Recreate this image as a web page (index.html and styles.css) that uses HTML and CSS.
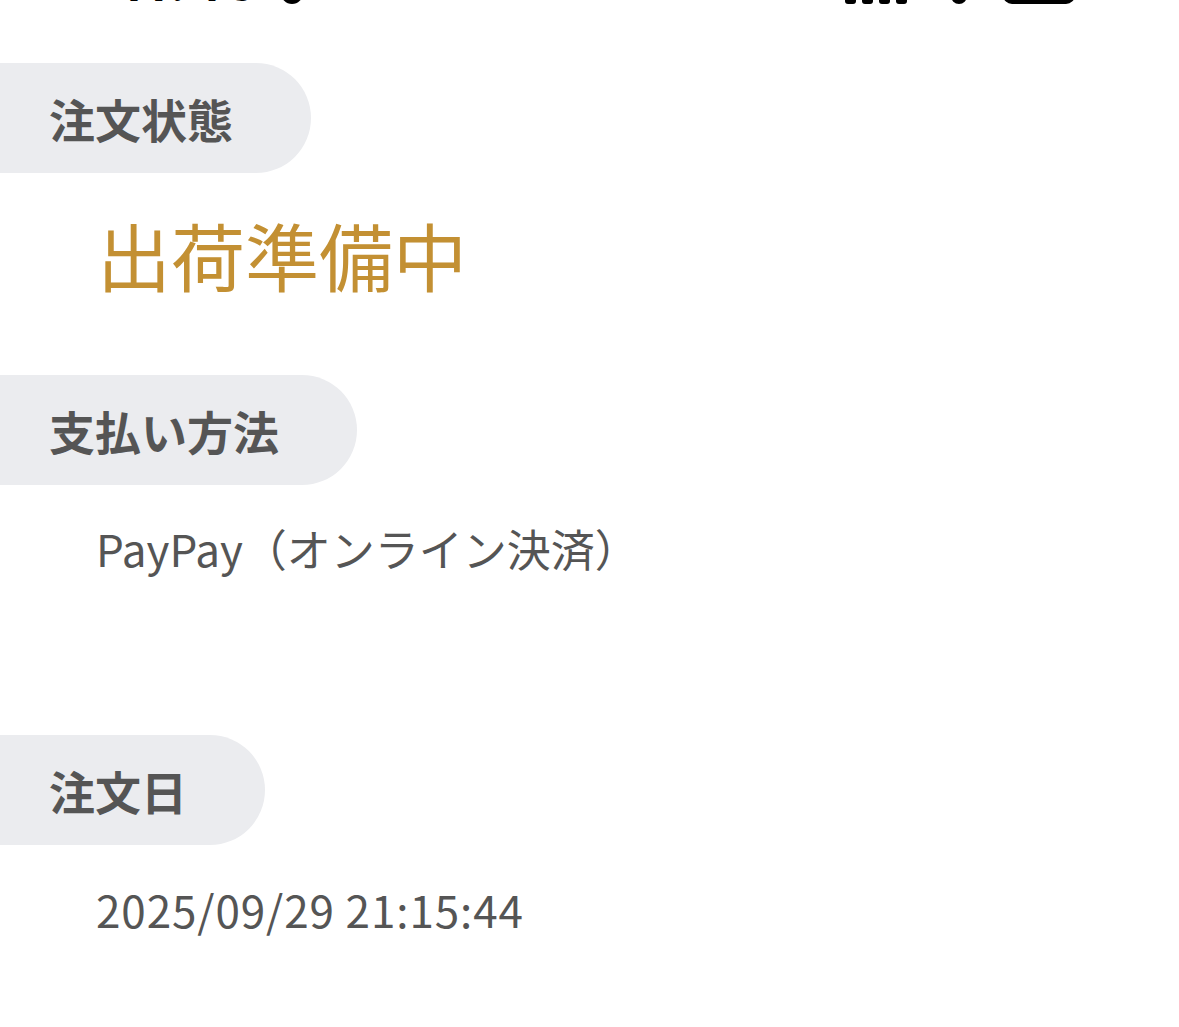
FILE: index.html
```html
<!DOCTYPE html>
<html lang="ja">
<head>
<meta charset="utf-8">
<title>注文詳細</title>
<link rel="stylesheet" href="styles.css">
</head>
<body>
<div class="statusbar">
  <div class="sb-left">
    <span class="sb-time">11:45</span>
    <span class="sb-loc"></span>
  </div>
  <div class="sb-right">
    <span class="sb-signal"><i></i><i></i><i></i><i></i></span>
    <span class="sb-wifi"></span>
    <span class="sb-battery"></span>
  </div>
</div>
<main class="details">
  <section class="field field-status">
    <div class="pill">注文状態</div>
    <div class="value value-status">出荷準備中</div>
  </section>
  <section class="field field-payment">
    <div class="pill">支払い方法</div>
    <div class="value">PayPay（オンライン決済）</div>
  </section>
  <section class="field field-date">
    <div class="pill">注文日</div>
    <div class="value value-date">2025/09/29 21:15:44</div>
  </section>
</main>
</body>
</html>
```
FILE: styles.css
```css
html, body {
  margin: 0;
  padding: 0;
  background: #ffffff;
}
body {
  font-family: "Noto Sans CJK JP", "Noto Sans", sans-serif;
  color: #555555;
  width: 1179px;
  height: 1027px;
  overflow: hidden;
}
.statusbar {
  height: 4px;
  overflow: hidden;
  display: flex;
  justify-content: space-between;
  align-items: flex-end;
  padding: 0 104px 0 120px;
}
.sb-left, .sb-right {
  display: flex;
  align-items: flex-end;
  height: 4px;
}
.sb-time {
  font-family: "Inter", "Liberation Sans", sans-serif;
  font-weight: 700;
  font-size: 48px;
  line-height: 40px;
  color: #000;
  display: block;
  height: 40px;
  flex: none;
  letter-spacing: 4px;
}
.sb-loc {
  width: 22px;
  height: 30px;
  background: #000;
  border-radius: 11px;
  margin-left: 20px;
  flex: none;
}
.sb-signal {
  display: flex;
  gap: 6px;
  align-items: flex-end;
  flex: none;
}
.sb-signal i {
  width: 11px;
  height: 30px;
  background: #000;
  border-radius: 3px;
}
.sb-wifi {
  width: 16px;
  height: 30px;
  background: #000;
  border-radius: 0 0 8px 8px;
  margin-left: 44px;
  flex: none;
}
.sb-battery {
  width: 72px;
  height: 30px;
  background: #000;
  border-radius: 9px;
  margin-left: 36px;
  flex: none;
}
.details {
  padding-top: 59px;
}
.field {
  display: flex;
  flex-direction: column;
  align-items: flex-start;
}
.pill {
  height: 110px;
  box-sizing: border-box;
  display: flex;
  align-items: center;
  padding: 0 78px 0 49px;
  background: #ebecef;
  border-radius: 0 55px 55px 0;
  font-size: 46px;
  font-weight: 700;
  color: #555555;
  line-height: 1;
}
.value {
  padding-left: 96px;
  font-size: 44px;
  line-height: 60px;
  color: #555555;
  font-weight: 400;
}
.value-date {
  letter-spacing: 0.9px;
}
.value-status {
  font-size: 74px;
  line-height: 108px;
  color: #c39033;
  padding-left: 97px;
  margin-top: 27px;
}
.field-status {
  margin-bottom: 67px;
}
.field-payment .value {
  margin-top: 33px;
}
.field-payment {
  margin-bottom: 157px;
}
.field-date .value {
  margin-top: 34px;
}
```
